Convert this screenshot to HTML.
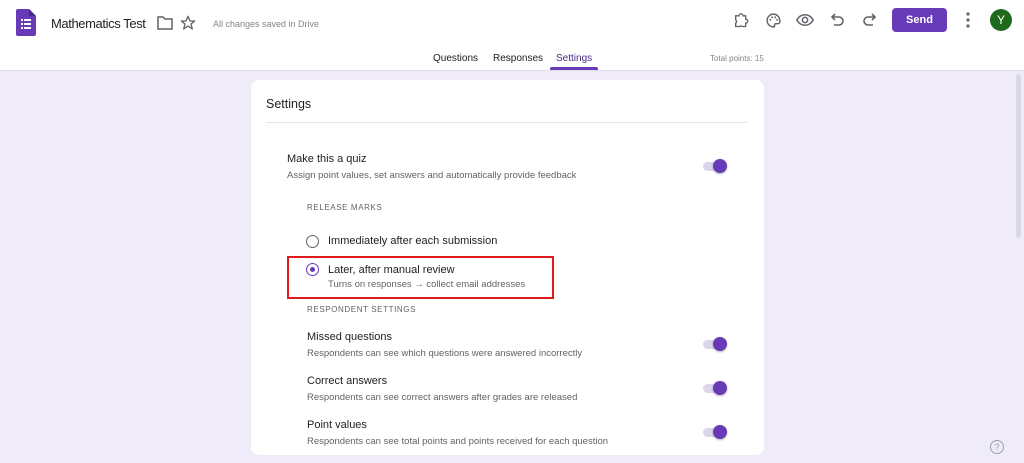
<!DOCTYPE html>
<html><head><meta charset="utf-8"><style>
*{margin:0;padding:0;box-sizing:border-box}
body{width:1024px;height:463px;overflow:hidden;background:#f0ebf8;font-family:"Liberation Sans",Arial,sans-serif;position:relative;color:#202124}
.a{position:absolute;white-space:nowrap}
#hdr{position:absolute;left:0;top:0;width:1024px;height:71px;background:#fff;border-bottom:1px solid #e0dce8}
.card{position:absolute;left:251px;top:80px;width:513px;height:375px;background:#fff;border-radius:8px}
.t{font-size:11px;color:#202124}
.s{font-size:9.5px;color:#5f6368}
.cap{font-size:8px;letter-spacing:.6px;color:#5f6368}
.tg{position:absolute;width:22px;height:9px;border-radius:5px;background:#dcd6ec}
.tg::after{content:"";position:absolute;right:-2px;top:-3px;width:14px;height:14px;border-radius:50%;background:#673ab7;box-shadow:0 1px 2px rgba(0,0,0,.3)}
.ic{position:absolute}
</style></head><body>
<div id="hdr"></div>
<svg class="ic" style="left:16px;top:9px" width="20" height="27" viewBox="0 0 20 27"><path d="M2 0h11l7 7v18a2 2 0 0 1-2 2H2a2 2 0 0 1-2-2V2a2 2 0 0 1 2-2z" fill="#673ab7"/><path d="M13 0v7h7z" fill="#4a2a8a"/><g fill="#fff"><rect x="5" y="10" width="2" height="2"/><rect x="8" y="10" width="7" height="2"/><rect x="5" y="14" width="2" height="2"/><rect x="8" y="14" width="7" height="2"/><rect x="5" y="18" width="2" height="2"/><rect x="8" y="18" width="7" height="2"/></g></svg>
<div class="a" style="left:51px;top:16px;font-size:13px;letter-spacing:-0.4px;color:#202124">Mathematics Test</div>
<svg class="ic" style="left:157px;top:16px" width="16" height="14" viewBox="0 0 16 14"><path d="M1 1h5l2 2h7v10H1z" fill="none" stroke="#5f6368" stroke-width="1.5"/></svg>
<svg class="ic" style="left:180px;top:15px" width="16" height="16" viewBox="0 0 24 24"><path d="M12 2l3 7h7l-5.5 4.5 2 7.5-6.5-4.5-6.5 4.5 2-7.5L2 9h7z" fill="none" stroke="#5f6368" stroke-width="2" stroke-linejoin="round"/></svg>
<div class="a" style="left:213px;top:19px;font-size:9px;color:#80868b">All changes saved in Drive</div>
<svg class="ic" style="left:733px;top:12px" width="16" height="17" viewBox="0 0 24 24"><path d="M4 5h5a3 3 0 0 1 6 0h4v5a3 3 0 0 1 0 6v5h-5a3 3 0 0 0-4 0H4v-5a3 3 0 0 0 0-5z" fill="none" stroke="#5f6368" stroke-width="2"/></svg>
<svg class="ic" style="left:765px;top:12px" width="17" height="17" viewBox="0 0 24 24"><path d="M12 3a9 9 0 0 0 0 18c1.5 0 2-1 1.5-2s0-2.5 1.5-2.5H18a3 3 0 0 0 3-3C21 7 17 3 12 3z" fill="none" stroke="#5f6368" stroke-width="2"/><circle cx="7.5" cy="11" r="1.3" fill="#5f6368"/><circle cx="10" cy="7.5" r="1.3" fill="#5f6368"/><circle cx="14.5" cy="7.5" r="1.3" fill="#5f6368"/><circle cx="17" cy="11" r="1.3" fill="#5f6368"/></svg>
<svg class="ic" style="left:796px;top:13px" width="18" height="14" viewBox="0 0 24 18"><path d="M1 9c3-5 7-7 11-7s8 2 11 7c-3 5-7 7-11 7S4 14 1 9z" fill="none" stroke="#5f6368" stroke-width="2"/><circle cx="12" cy="9" r="3.5" fill="none" stroke="#5f6368" stroke-width="2"/></svg>
<svg class="ic" style="left:831px;top:13px" width="13" height="14" viewBox="0 0 13 14"><path d="M4 1L1 4l3 3M1 4h7a4 4 0 0 1 0 8H3" fill="none" stroke="#5f6368" stroke-width="1.6"/></svg>
<svg class="ic" style="left:863px;top:13px" width="13" height="14" viewBox="0 0 13 14"><path d="M9 1l3 3-3 3M12 4H5a4 4 0 0 0 0 8h5" fill="none" stroke="#5f6368" stroke-width="1.6"/></svg>
<div class="a" style="left:892px;top:8px;width:55px;height:24px;background:#673ab7;border-radius:4px;color:#fff;font-size:11px;font-weight:bold;text-align:center;line-height:24px">Send</div>
<svg class="ic" style="left:966px;top:12px" width="4" height="16" viewBox="0 0 4 16"><circle cx="2" cy="2" r="1.6" fill="#5f6368"/><circle cx="2" cy="8" r="1.6" fill="#5f6368"/><circle cx="2" cy="14" r="1.6" fill="#5f6368"/></svg>
<div class="a" style="left:990px;top:9px;width:22px;height:22px;border-radius:50%;background:#1e6b1e;color:#fff;font-size:12px;text-align:center;line-height:22px">Y</div>
<div class="a" style="left:433px;top:53px;font-size:10px;color:#202124">Questions</div>
<div class="a" style="left:493px;top:53px;font-size:10px;color:#202124">Responses</div>
<div class="a" style="left:556px;top:53px;font-size:10px;color:#4a2a8a">Settings</div>
<div class="a" style="left:550px;top:67px;width:48px;height:3px;background:#673ab7;border-radius:2px 2px 0 0"></div>
<div class="a" style="left:710px;top:54px;font-size:8px;color:#80868b">Total points: 15</div>
<div class="a" style="left:1016px;top:74px;width:5px;height:164px;background:#dad8e0;border-radius:3px"></div>
<div class="card">
<div class="a" style="left:15px;top:17px;font-size:12.5px;color:#202124">Settings</div>
<div class="a" style="left:15px;top:42px;width:481px;height:1px;background:#e6e6ea"></div>
<div class="a t" style="left:36px;top:73px">Make this a quiz</div>
<div class="a s" style="left:36px;top:90px">Assign point values, set answers and automatically provide feedback</div>
<div class="tg" style="left:452px;top:82px"></div>
<div class="a cap" style="left:56px;top:123px">RELEASE MARKS</div>
<div class="a" style="left:55px;top:155px;width:13px;height:13px;border:1.5px solid #5f6368;border-radius:50%"></div>
<div class="a t" style="left:77px;top:155px">Immediately after each submission</div>
<div class="a" style="left:55px;top:183px;width:13px;height:13px;border:1.5px solid #673ab7;border-radius:50%"><div style="position:absolute;left:2.5px;top:2.5px;width:5px;height:5px;border-radius:50%;background:#673ab7"></div></div>
<div class="a t" style="left:77px;top:184px">Later, after manual review</div>
<div class="a s" style="left:77px;top:199px">Turns on responses → collect email addresses</div>
<div class="a" style="left:36px;top:176px;width:267px;height:43px;border:2px solid #e01b1b"></div>
<div class="a cap" style="left:56px;top:225px">RESPONDENT SETTINGS</div>
<div class="a t" style="left:56px;top:251px">Missed questions</div>
<div class="a s" style="left:56px;top:268px">Respondents can see which questions were answered incorrectly</div>
<div class="tg" style="left:452px;top:260px"></div>
<div class="a t" style="left:56px;top:295px">Correct answers</div>
<div class="a s" style="left:56px;top:312px">Respondents can see correct answers after grades are released</div>
<div class="tg" style="left:452px;top:304px"></div>
<div class="a t" style="left:56px;top:339px">Point values</div>
<div class="a s" style="left:56px;top:356px">Respondents can see total points and points received for each question</div>
<div class="tg" style="left:452px;top:348px"></div>
</div>
<div class="a" style="left:990px;top:440px;width:14px;height:14px;border:1.3px solid #9aa0a6;border-radius:50%;font-size:9px;color:#9aa0a6;text-align:center;line-height:12px">?</div>
</body></html>
